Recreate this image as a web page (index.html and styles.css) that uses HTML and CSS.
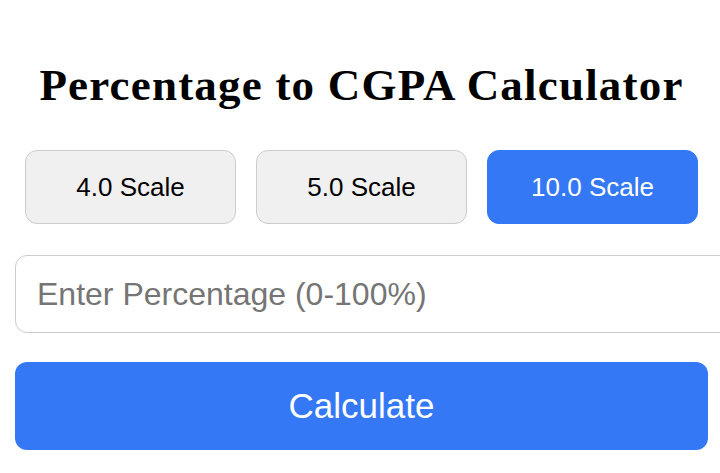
FILE: index.html
```html
<!DOCTYPE html>
<html lang="en">

<head>
    <meta charset="UTF-8">
    <meta name="viewport" content="width=device-width, initial-scale=1.0">
    <title>Percentage to CGPA Calculator</title>
    <link rel="stylesheet" href="styles.css">
</head>

<body>
    <div class="container">
        <h1 class="title">Percentage to CGPA Calculator</h1>

        <div class="scales">
            <button class="scale">4.0 Scale</button>
            <button class="scale">5.0 Scale</button>
            <button class="scale active">10.0 Scale</button>
        </div>

        <input type="text" class="percent" placeholder="Enter Percentage (0-100%)">

        <button class="calc">Calculate</button>
    </div>
</body>

</html>
```

FILE: styles.css
```css
body {
    margin: 0;
    background-color: #ffffff;
    font-family: "Liberation Sans", Arial, sans-serif;
}

.container {
    width: 693px;
    margin-left: 15px;
    padding-top: 51px;
}

.title {
    font-family: "Liberation Serif", "Times New Roman", serif;
    font-size: 45px;
    letter-spacing: 1.2px;
    font-weight: bold;
    text-align: center;
    margin: 0 0 31px 0;
    line-height: 68px;
}

.scales {
    display: flex;
    justify-content: center;
    gap: 20px;
    margin-bottom: 31px;
}

.scale {
    width: 211px;
    height: 74px;
    background-color: #f0f0f0;
    border: 1px solid #cccccc;
    border-radius: 12px;
    font-family: "Liberation Sans", Arial, sans-serif;
    font-size: 26px;
    color: #000000;
}

.scale.active {
    background-color: #3478f6;
    border-color: #3478f6;
    color: #ffffff;
}

.percent {
    display: block;
    width: 100%;
    height: 76px;
    padding: 0 21px;
    border: 1px solid #cccccc;
    border-radius: 12px;
    font-family: "Liberation Sans", Arial, sans-serif;
    font-size: 32px;
    margin-bottom: 29px;
}

.percent::placeholder {
    color: #757575;
}

.calc {
    display: block;
    width: 100%;
    height: 88px;
    background-color: #3478f6;
    color: #ffffff;
    border: none;
    border-radius: 12px;
    font-family: "Liberation Sans", Arial, sans-serif;
    font-size: 35px;
}
```
